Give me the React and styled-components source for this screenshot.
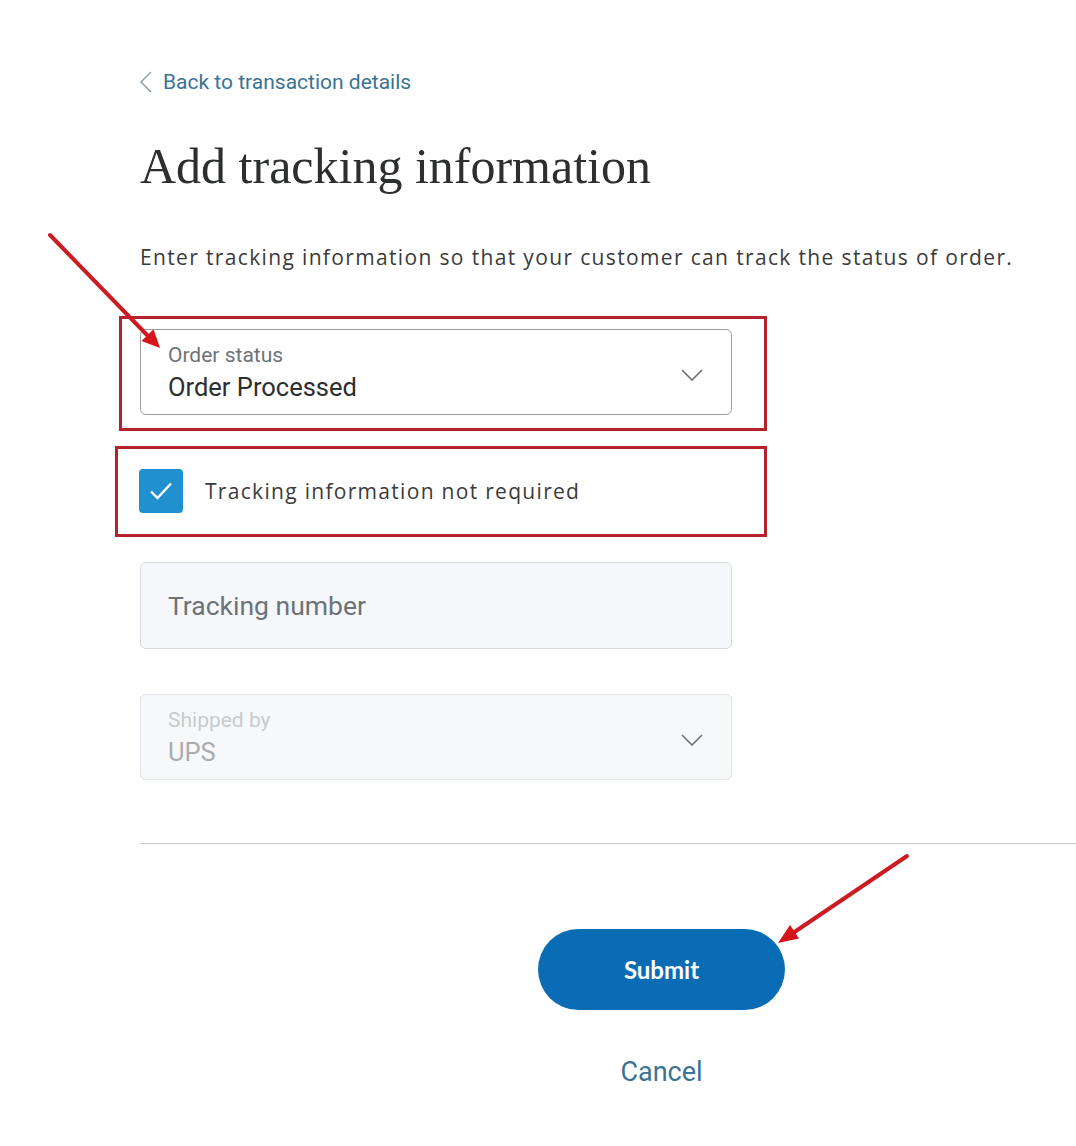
import * as React from 'react';
import styled, { createGlobalStyle } from 'styled-components';

const GlobalStyle = createGlobalStyle`
  html, body {
    margin: 0;
    padding: 0;
    background: #ffffff;
  }
  body {
    font-family: Roboto, 'Liberation Sans', Arial, sans-serif;
    overflow-x: hidden;
  }
`;

const Page = styled.main`
  position: relative;
  width: 1076px;
  min-height: 1146px;
  box-sizing: border-box;
  padding: 70px 0 0 140px;
`;

const BackLink = styled.a`
  display: inline-flex;
  align-items: center;
  gap: 11px;
  font-family: Roboto, 'Liberation Sans', sans-serif;
  font-size: 21px;
  line-height: 24px;
  color: #3a7394;
  text-decoration: none;
  cursor: pointer;
`;

const Title = styled.h1`
  margin: 41px 0 0;
  font-family: 'Liberation Serif', 'Times New Roman', serif;
  font-weight: 400;
  font-size: 50px;
  line-height: 56px;
  color: #2c2e2f;
`;

const Intro = styled.p`
  margin: 49px 0 0;
  font-family: 'Open Sans', Lato, sans-serif;
  font-size: 21px;
  line-height: 28px;
  letter-spacing: 1.35px;
  color: #3b3b3b;
  white-space: nowrap;
`;

const Field = styled.div`
  position: relative;
  width: 592px;
  margin-top: ${(p) => p.$gap}px;
`;

const SelectBox = styled.div`
  display: flex;
  align-items: flex-start;
  justify-content: space-between;
  box-sizing: border-box;
  height: 86px;
  padding: 13px 28px 0 27px;
  border: 1px solid ${(p) => (p.$disabled ? '#e1e4e8' : '#9b9b9b')};
  border-radius: 6px;
  background: ${(p) => (p.$disabled ? '#f7f8fa' : '#ffffff')};
`;

const SelectText = styled.div`
  display: flex;
  flex-direction: column;
  gap: 5px;
`;

const Label = styled.span`
  font-size: 21px;
  line-height: 24px;
  color: ${(p) => (p.$disabled ? '#c9cbcd' : '#6c7378')};
`;

const Value = styled.span`
  font-size: 25.5px;
  line-height: 30px;
  color: ${(p) => (p.$disabled ? '#a9acaf' : '#2c2e2f')};
`;

const Chevron = styled.svg`
  width: 22px;
  height: 12px;
  margin-top: 26px;
  flex-shrink: 0;
`;

const TextInput = styled.input`
  display: block;
  box-sizing: border-box;
  width: 100%;
  height: 87px;
  padding: 0 27px;
  border: 1px solid #d6d9dc;
  border-radius: 6px;
  background: #f5f7fa;
  font-family: Roboto, 'Liberation Sans', sans-serif;
  font-size: 26.5px;
  color: #2c2e2f;
  outline: none;

  &::placeholder {
    color: #6c7378;
  }
`;

const CheckRow = styled.label`
  display: flex;
  align-items: center;
  gap: 22px;
  height: 44px;
  margin-left: -1px;
  cursor: pointer;
`;

const CheckBox = styled.span`
  display: flex;
  align-items: center;
  justify-content: center;
  width: 44px;
  height: 44px;
  border-radius: 4px;
  background: #2190cf;
`;

const CheckLabel = styled.span`
  font-family: 'Open Sans', Lato, sans-serif;
  font-size: 21px;
  letter-spacing: 1.3px;
  color: #3b3b3b;
`;

const Highlight = styled.span`
  position: absolute;
  top: ${(p) => p.$t}px;
  bottom: ${(p) => p.$b}px;
  left: ${(p) => p.$l}px;
  right: ${(p) => p.$r}px;
  border: 3px solid #b5222b;
  pointer-events: none;
`;

const Divider = styled.hr`
  margin: 63px 0 0;
  border: 0;
  border-top: 1px solid #c9cccf;
  width: 936px;
`;

const Actions = styled.div`
  display: flex;
  flex-direction: column;
  align-items: center;
  width: 247px;
  margin: 85px 0 0 398px;
`;

const SubmitButton = styled.button`
  width: 247px;
  height: 81px;
  border: 0;
  border-radius: 41px;
  background: #0a6cb4;
  color: #ffffff;
  font-family: Lato, 'Open Sans', sans-serif;
  font-weight: 700;
  font-size: 24px;
  cursor: pointer;
`;

const CancelLink = styled.a`
  margin-top: 47px;
  font-size: 27px;
  line-height: 30px;
  color: #3a7394;
  cursor: pointer;
`;

const Arrows = styled.svg`
  position: absolute;
  top: 0;
  left: 0;
  width: 1076px;
  height: 1146px;
  pointer-events: none;
`;

function ChevronDown() {
  return (
    <Chevron viewBox="0 0 22 12" fill="none">
      <path d="M1 1l10 10L21 1" stroke="#6c7378" strokeWidth="1.6" />
    </Chevron>
  );
}

function Select({ label, value, disabled, gap, children }) {
  return (
    <Field $gap={gap}>
      <SelectBox $disabled={disabled}>
        <SelectText>
          <Label $disabled={disabled}>{label}</Label>
          <Value $disabled={disabled}>{value}</Value>
        </SelectText>
        <ChevronDown />
      </SelectBox>
      {children}
    </Field>
  );
}

export default function App() {
  return (
    <>
      <GlobalStyle />
      <Page>
        <BackLink>
          <svg width="12" height="22" viewBox="0 0 12 22" fill="none">
            <path d="M11 1L1 11l10 10" stroke="#8a9aa5" strokeWidth="1.4" />
          </svg>
          Back to transaction details
        </BackLink>

        <Title>Add tracking information</Title>

        <Intro>
          Enter tracking information so that your customer can track the status of order.
        </Intro>

        <Select label="Order status" value="Order Processed" gap={58}>
          <Highlight $t={-13} $b={-16} $l={-21} $r={-35} />
        </Select>

        <Field $gap={54}>
          <CheckRow>
            <CheckBox>
              <svg width="24" height="20" viewBox="0 0 24 20" fill="none">
                <path d="M2 10.5l6.5 6.5L22 2.5" stroke="#ffffff" strokeWidth="2.4" />
              </svg>
            </CheckBox>
            <CheckLabel>Tracking information not required</CheckLabel>
          </CheckRow>
          <Highlight $t={-23} $b={-24} $l={-25} $r={-35} />
        </Field>

        <Field $gap={49}>
          <TextInput placeholder="Tracking number" />
        </Field>

        <Select label="Shipped by" value="UPS" disabled gap={45} />

        <Divider />

        <Actions>
          <SubmitButton>Submit</SubmitButton>
          <CancelLink>Cancel</CancelLink>
        </Actions>

        <Arrows viewBox="0 0 1076 1146">
          <g stroke="#cc1b22" strokeWidth="4" strokeLinecap="round">
            <line x1="50" y1="235" x2="148" y2="336" />
            <line x1="907" y1="856" x2="793" y2="933" />
          </g>
          <g fill="#d5141c">
            <polygon points="160,348 141.5,341 153.5,329.2" />
            <polygon points="778,943 790,925 799,938.5" />
          </g>
        </Arrows>
      </Page>
    </>
  );
}
